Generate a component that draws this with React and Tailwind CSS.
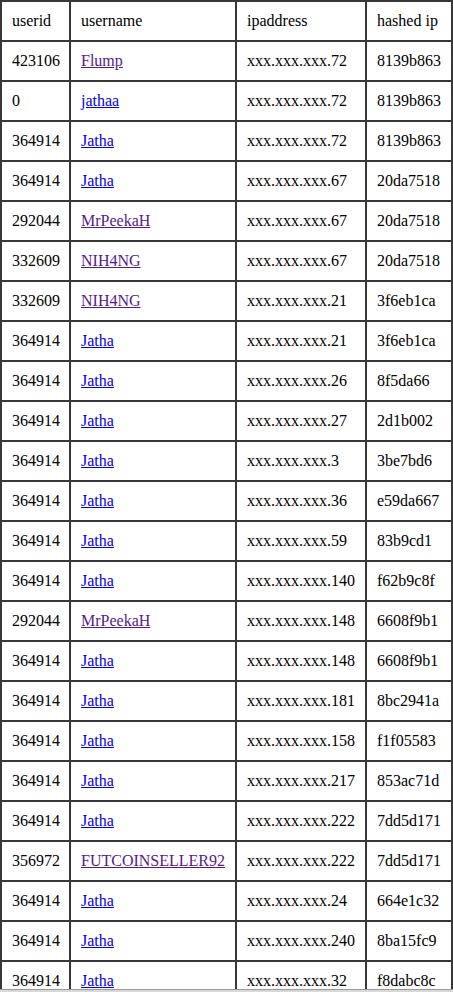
const rows = [
  ['423106', 'Flump', true, 'xxx.xxx.xxx.72', '8139b863'],
  ['0', 'jathaa', false, 'xxx.xxx.xxx.72', '8139b863'],
  ['364914', 'Jatha', false, 'xxx.xxx.xxx.72', '8139b863'],
  ['364914', 'Jatha', false, 'xxx.xxx.xxx.67', '20da7518'],
  ['292044', 'MrPeekaH', true, 'xxx.xxx.xxx.67', '20da7518'],
  ['332609', 'NIH4NG', true, 'xxx.xxx.xxx.67', '20da7518'],
  ['332609', 'NIH4NG', true, 'xxx.xxx.xxx.21', '3f6eb1ca'],
  ['364914', 'Jatha', false, 'xxx.xxx.xxx.21', '3f6eb1ca'],
  ['364914', 'Jatha', false, 'xxx.xxx.xxx.26', '8f5da66'],
  ['364914', 'Jatha', false, 'xxx.xxx.xxx.27', '2d1b002'],
  ['364914', 'Jatha', false, 'xxx.xxx.xxx.3', '3be7bd6'],
  ['364914', 'Jatha', false, 'xxx.xxx.xxx.36', 'e59da667'],
  ['364914', 'Jatha', false, 'xxx.xxx.xxx.59', '83b9cd1'],
  ['364914', 'Jatha', false, 'xxx.xxx.xxx.140', 'f62b9c8f'],
  ['292044', 'MrPeekaH', true, 'xxx.xxx.xxx.148', '6608f9b1'],
  ['364914', 'Jatha', false, 'xxx.xxx.xxx.148', '6608f9b1'],
  ['364914', 'Jatha', false, 'xxx.xxx.xxx.181', '8bc2941a'],
  ['364914', 'Jatha', false, 'xxx.xxx.xxx.158', 'f1f05583'],
  ['364914', 'Jatha', false, 'xxx.xxx.xxx.217', '853ac71d'],
  ['364914', 'Jatha', false, 'xxx.xxx.xxx.222', '7dd5d171'],
  ['356972', 'FUTCOINSELLER92', true, 'xxx.xxx.xxx.222', '7dd5d171'],
  ['364914', 'Jatha', false, 'xxx.xxx.xxx.24', '664e1c32'],
  ['364914', 'Jatha', false, 'xxx.xxx.xxx.240', '8ba15fc9'],
  ['364914', 'Jatha', false, 'xxx.xxx.xxx.32', 'f8dabc8c'],
]

const cell = "h-[40px] border-r-2 border-b-2 border-[#383838] pl-[10px] pr-0 py-0 text-left align-middle font-normal whitespace-nowrap font-['Liberation_Serif','Times_New_Roman',serif]"

export default function App() {
  return (
    <div className="min-h-screen bg-white text-black font-['Liberation_Serif','Times_New_Roman',serif]">
      <table className="table-fixed border-separate border-spacing-0 border-t-2 border-l-2 border-[#383838] text-[16px] leading-[18px] font-['Liberation_Serif','Times_New_Roman',serif]">
        <colgroup>
          <col className="w-[69px]" />
          <col className="w-[166px]" />
          <col className="w-[130px]" />
          <col className="w-[86px]" />
        </colgroup>
        <thead>
          <tr>
            <th className={cell}>userid</th>
            <th className={cell}>username</th>
            <th className={cell}>ipaddress</th>
            <th className={cell}>hashed ip</th>
          </tr>
        </thead>
        <tbody>
          {rows.map((r, i) => (
            <tr key={i}>
              <td className={cell}>{r[0]}</td>
              <td className={cell}>
                <a href="#" className={r[2] ? 'text-[#551a8b] underline' : 'text-[#0000ee] underline'}>
                  {r[1]}
                </a>
              </td>
              <td className={cell}>{r[3]}</td>
              <td className={cell}>{r[4]}</td>
            </tr>
          ))}
        </tbody>
      </table>
      <div className="fixed bottom-0 left-0 right-0 h-[3px] border-t border-[#9a9a9a] bg-[#d8d8d8]" />
    </div>
  )
}
